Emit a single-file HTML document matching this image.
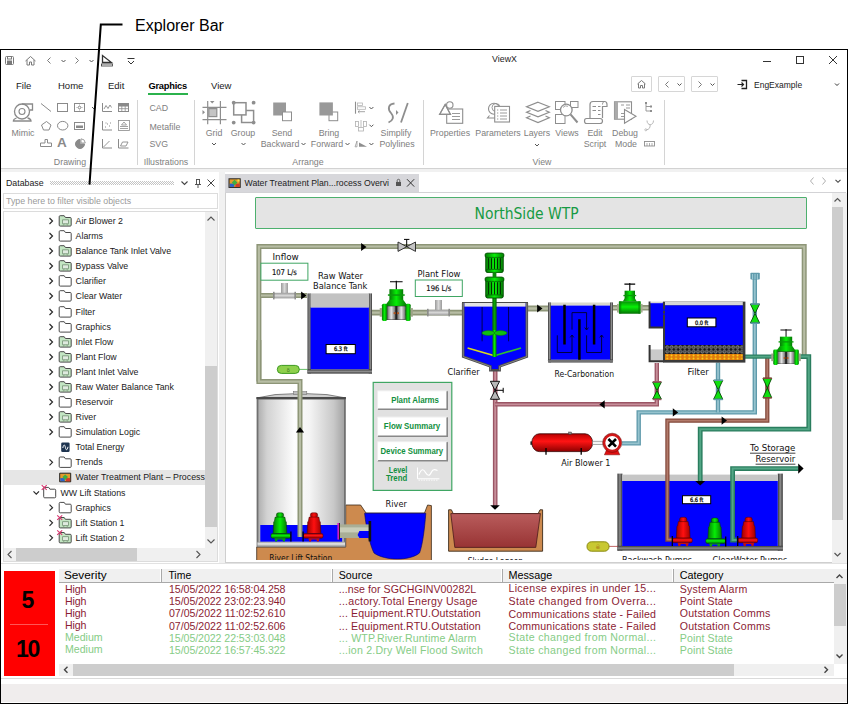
<!DOCTYPE html>
<html><head><meta charset="utf-8"><title>ViewX</title>
<style>
html,body{margin:0;padding:0;background:#fff;}
body{width:848px;height:704px;position:relative;overflow:hidden;font-family:"Liberation Sans",sans-serif;font-size:8.8px;color:#1a1a1a;}
.a{position:absolute;white-space:nowrap;}
.t{position:absolute;white-space:nowrap;line-height:12px;height:12px;}
.g{color:#7e7e7e;}
svg{position:absolute;left:0;top:0;overflow:visible;}
</style></head><body>
<!-- annotation -->
<div class="a" style="left:135px;top:15.6px;font-size:16px;line-height:20px;color:#000;">Explorer Bar</div>

<!-- window frame -->
<div class="a" style="left:0;top:49px;width:846px;height:653px;border:1px solid #000;background:#fff;box-sizing:content-box;"></div>

<!-- title bar -->
<div class="t" style="left:492px;top:53px;width:25px;text-align:center;">ViewX</div>
<svg width="848" height="704" viewBox="0 0 848 704" fill="none" stroke="#7a7a7a" stroke-width="1">
 <!-- save -->
 <rect x="5.5" y="56.5" width="8" height="8" rx="1"/><rect x="7.5" y="56.5" width="4" height="2.5"/><rect x="7.5" y="61" width="4" height="3.5" fill="#7a7a7a"/>
 <!-- home -->
 <path d="M25.5 61 L30.5 56.5 L35.5 61 M27 60 V65 H29.5 V62 H31.5 V65 H34 V60"/>
 <!-- nav -->
 <path d="M50.5 57.5 L47.5 60.5 L50.5 63.5" /><path d="M61.5 60 L63.5 62 L65.5 60" stroke="#555"/>
 <path d="M75.5 57.5 L78.5 60.5 L75.5 63.5" /><path d="M89.5 60 L91.5 62 L93.5 60" stroke="#555"/>
 <!-- ruler triangle -->
 <path d="M102.5 55.5 V62.5 H111.5 Z" stroke="#333" stroke-width="1.3"/><rect x="101.5" y="64" width="11" height="2" stroke="#333" stroke-width="0.8"/>
 <!-- customise -->
 <path d="M127.5 58.5 H134.5 M128 61 L131 64 L134 61" stroke="#333"/>
 <!-- window controls -->
 <path d="M763 61.5 H771" stroke="#333"/><rect x="796.5" y="56.5" width="7" height="7" stroke="#333"/><path d="M829 56 L837 64 M837 56 L829 64" stroke="#333"/>
</svg>
<!--TITLEBAR-->
<!-- tabs -->
<div class="t" style="left:16px;top:79.5px;font-size:9.5px;">File</div>
<div class="t" style="left:58px;top:79.5px;font-size:9.5px;">Home</div>
<div class="t" style="left:108px;top:79.5px;font-size:9.5px;">Edit</div>
<div class="t" style="left:148.5px;top:79.5px;font-size:9.3px;font-weight:bold;color:#000;letter-spacing:-0.25px;">Graphics</div>
<div class="a" style="left:148px;top:93px;width:40px;height:2px;background:#2bb24c;"></div>
<div class="t" style="left:211px;top:79.5px;font-size:9.5px;">View</div>
<div class="a" style="left:631px;top:76px;width:21px;height:16px;border:1px solid #d6d6d6;box-sizing:border-box;border-radius:1px;"></div>
<div class="a" style="left:658px;top:76px;width:27px;height:16px;border:1px solid #d6d6d6;box-sizing:border-box;border-radius:1px;"></div>
<div class="a" style="left:691px;top:76px;width:27px;height:16px;border:1px solid #d6d6d6;box-sizing:border-box;border-radius:1px;"></div>
<svg width="848" height="704" viewBox="0 0 848 704" fill="none" stroke="#7a7a7a" stroke-width="1">
 <path d="M637.5 84 L641.5 80.5 L645.5 84 M638.5 83.5 V88 H640.5 V85.5 H642.5 V88 H644.5 V83.5"/>
 <path d="M668.5 81.5 L665.5 84.5 L668.5 87.5"/><path d="M677.5 83.5 L679.5 85.5 L681.5 83.5" stroke="#555"/>
 <path d="M698.5 81.5 L701.5 84.5 L698.5 87.5"/><path d="M710.5 83.5 L712.5 85.5 L714.5 83.5" stroke="#555"/>
 <!-- login icon -->
 <path d="M741.5 80.5 H746.5 V88.5 H741.5" stroke="#222" stroke-width="1.3"/><path d="M737.5 84.5 H743.5 M741.5 82.5 L743.5 84.5 L741.5 86.5" stroke="#222" stroke-width="1.2"/>
 <path d="M835 83.5 L837 85.5 L839 83.5" stroke="#333"/>
</svg>
<div class="t" style="left:754px;top:79px;font-size:8.5px;">EngExample</div>
<!--TABS-->
<!-- ribbon -->
<div class="t g" style="left:8px;top:127px;width:30px;text-align:center;">Mimic</div>
<div class="t g" style="left:50px;top:156px;width:40px;text-align:center;">Drawing</div>
<div class="t g" style="left:149.5px;top:102px;">CAD</div>
<div class="t g" style="left:149.5px;top:120.5px;">Metafile</div>
<div class="t g" style="left:149.5px;top:138px;">SVG</div>
<div class="t g" style="left:140px;top:156px;width:52px;text-align:center;">Illustrations</div>
<div class="t g" style="left:199px;top:127px;width:30px;text-align:center;">Grid</div>
<div class="t g" style="left:228px;top:127px;width:30px;text-align:center;">Group</div>
<div class="t g" style="left:267px;top:127px;width:30px;text-align:center;">Send</div>
<div class="t g" style="left:258px;top:137.5px;width:44px;text-align:center;">Backward</div>
<div class="t g" style="left:314px;top:127px;width:30px;text-align:center;">Bring</div>
<div class="t g" style="left:308px;top:137.5px;width:38px;text-align:center;">Forward</div>
<div class="t g" style="left:376px;top:127px;width:40px;text-align:center;">Simplify</div>
<div class="t g" style="left:376px;top:137.5px;width:42px;text-align:center;">Polylines</div>
<div class="t g" style="left:288px;top:156px;width:40px;text-align:center;">Arrange</div>
<div class="t g" style="left:425px;top:127px;width:50px;text-align:center;">Properties</div>
<div class="t g" style="left:472px;top:127px;width:52px;text-align:center;">Parameters</div>
<div class="t g" style="left:522px;top:127px;width:30px;text-align:center;">Layers</div>
<div class="t g" style="left:552px;top:127px;width:30px;text-align:center;">Views</div>
<div class="t g" style="left:580px;top:127px;width:30px;text-align:center;">Edit</div>
<div class="t g" style="left:580px;top:137.5px;width:30px;text-align:center;">Script</div>
<div class="t g" style="left:610px;top:127px;width:30px;text-align:center;">Debug</div>
<div class="t g" style="left:610px;top:137.5px;width:32px;text-align:center;">Mode</div>
<div class="t g" style="left:527px;top:156px;width:30px;text-align:center;">View</div>
<div class="a" style="left:137px;top:100px;width:1px;height:65px;background:#d4d4d4;"></div>
<div class="a" style="left:194px;top:100px;width:1px;height:65px;background:#d4d4d4;"></div>
<div class="a" style="left:422.5px;top:100px;width:1px;height:65px;background:#d4d4d4;"></div>
<div class="a" style="left:663.5px;top:100px;width:1px;height:65px;background:#d4d4d4;"></div>
<div class="a" style="left:1px;top:168px;width:846px;height:1px;background:#d2d2d2;"></div>
<div class="a" style="left:1px;top:169px;width:846px;height:3px;background:#f1f1f1;"></div>
<svg width="848" height="704" viewBox="0 0 848 704" fill="none" stroke="#8a8a8a" stroke-width="1">
 <!-- mimic icon -->
 <path d="M22 104 H32.5 V110 H29.5" stroke-width="1.3"/><circle cx="22" cy="111.5" r="7.5" stroke-width="1.3"/><circle cx="22" cy="111.5" r="3" stroke-width="1.1"/>
 <path d="M16.5 118 C14.5 118.6 13.4 119.6 13.4 121 H31 C31 119.6 29.8 118.6 27.6 118" stroke-width="1.3"/>
 <!-- drawing row1 -->
 <path d="M41 103.5 L51 111.5"/><rect x="57.5" y="103.5" width="10" height="8"/><rect x="74.5" y="103.5" width="10" height="8"/><circle cx="79.5" cy="107.5" r="1.3"/><path d="M79.5 104.5V105.5M79.5 109.5V110.5M76.5 107.5H77.5M81.5 107.5H82.5" stroke-width="0.7"/>
 <path d="M92 107 L94 109 L96 107" stroke="#555"/>
 <!-- row2 -->
 <path d="M46.5 121.5 L51 125 L49 130 H43.5 L41.5 125 Z"/><ellipse cx="62.7" cy="125.7" rx="5.2" ry="4.3"/><rect x="74.5" y="122.5" width="10" height="7"/><rect x="76" y="125.5" width="7" height="2.5" fill="#8a8a8a" stroke="none"/>
 <!-- row3 -->
 <path d="M45 139.5 H47.5 V143 H51.5 V146.5 H40.5 V143 H45 Z"/>
 <path d="M80 139.5 A4.5 4.5 0 1 0 84.5 144 H80 Z" fill="#8a8a8a"/><path d="M81 138.8 A4.5 4.5 0 0 1 85.3 143 H81 Z" stroke-width="0.8"/>
 <!-- chart icons -->
 <path d="M102.5 103 V111.5 H112"/><path d="M104 109 L106 105.5 L108 108.5 L110 105 L111.5 107.5" stroke-width="0.9"/>
 <rect x="118.5" y="103.5" width="10" height="8"/><rect x="118.5" y="103.5" width="10" height="2.5" fill="#8a8a8a"/><path d="M121.8 103.5V111.5M125.2 103.5V111.5M118.5 108.7H128.5" stroke-width="0.8"/>
 <path d="M102.5 121 V130 H112"/><path d="M105 127h1M107 124h1M109 126h1M110 123h1M105.5 123h1" stroke-width="1"/>
 <rect x="118.5" y="120.5" width="11" height="10" stroke-width="0.8"/><path d="M120 126.5H128M120 128.5H128M121.5 125 L124 122 L126.5 125Z" stroke-width="0.8"/>
 <path d="M102.5 139 V148 H112"/><path d="M103.5 147 L109.5 141" stroke-width="0.9"/>
 <path d="M118.5 139 V148 H128.5"/><path d="M120.5 146 L122.5 142 H128 L126 146 Z" stroke-width="0.9"/>
</svg>
<div class="a" style="left:57px;top:135px;font-size:13.5px;font-weight:bold;color:#8a8a8a;line-height:16px;">A</div>
<svg width="848" height="704" viewBox="0 0 848 704" fill="none" stroke="#8e8e8e" stroke-width="1">
 <!-- grid -->
 <path d="M207.7 101 V124.3 M220.4 101 V124.3 M202.5 107.4 H226.5 M202.5 119.7 H226.5" stroke-width="1.2"/>
 <rect x="208.8" y="108.6" width="8" height="8" fill="#c4c4c4" stroke-width="1.2"/>
 <path d="M210 101 H214.5 L212.2 103.5 Z M202.5 110 V114.5 L205 112.2 Z" fill="#8e8e8e" stroke="none"/>
 <!-- group -->
 <rect x="233.7" y="102.7" width="12.3" height="12.2" stroke-width="1.5"/><path d="M246 110.6 H253.6 V122.6 H241.6 V115" stroke-width="1.5"/>
 <circle cx="233.7" cy="102.7" r="1.9" fill="#8e8e8e" stroke="none"/><circle cx="253.6" cy="102.7" r="1.9" fill="#8e8e8e" stroke="none"/><circle cx="233.7" cy="122.6" r="1.9" fill="#8e8e8e" stroke="none"/><circle cx="253.6" cy="122.6" r="1.9" fill="#8e8e8e" stroke="none"/>
 <!-- send backward -->
 <rect x="273.2" y="102.5" width="12.8" height="13" fill="#999" stroke="none"/><rect x="282.5" y="112" width="9" height="8.7" fill="#fff"/>
 <!-- bring forward -->
 <rect x="329" y="112" width="8.7" height="8.7" fill="#fff"/><rect x="319.4" y="102.4" width="13.5" height="13.1" fill="#999" stroke="none"/>
 <!-- align small icons -->
 <path d="M355.5 101.7 V113.7" stroke-width="1.1"/><rect x="357.5" y="103" width="5" height="2.5" stroke="#b5b5b5" stroke-width="0.8"/><rect x="357.5" y="106.8" width="8" height="2.5" stroke="#b5b5b5" stroke-width="0.8"/><path d="M358 111.7 H365 M359.5 110.5 L358 111.7 L359.5 113" stroke-width="0.8"/>
 <rect x="355.5" y="121.5" width="3" height="5" stroke="#b0b0b0" stroke-width="0.8"/><rect x="363.5" y="121.5" width="3" height="5" stroke="#b0b0b0" stroke-width="0.8"/><rect x="358.5" y="127.5" width="5" height="3.5" stroke="#b0b0b0" stroke-width="0.8"/><path d="M361 120 V127" stroke="#b0b0b0" stroke-width="0.8"/>
 <path d="M355 146.8 L357 141 V146.8 Z" stroke-width="0.7"/><path d="M359 142.5 L367 146.8 H359 Z" fill="#8e8e8e" stroke="none"/>
 <path d="M369.4 107 L371.4 109 L373.4 107 M369.4 124.7 L371.4 126.7 L373.4 124.7 M369.4 143 L371.4 145 L373.4 143" stroke="#555"/>
 <!-- simplify -->
 <path d="M394.5 103.5 C388 104, 387.5 109, 391 113 C394.5 117, 393 120.5, 388.5 122.5" stroke-width="1.8"/><path d="M407.8 103 L401 122.5" stroke-width="1.8"/><path d="M396 110 V115 L398.5 112.5 Z" fill="#8e8e8e" stroke="none"/>
 <!-- chevrons under labels -->
 <path d="M212 143 L214 145 L216 143 M241.5 143 L243.5 145 L245.5 143 M301.5 143 L303.5 145 L305.5 143 M345.5 143 L347.5 145 L349.5 143 M535 144 L537 146 L539 144" stroke="#555"/>
 <!-- properties -->
 <rect x="446.7" y="109" width="16" height="14.3" fill="#fff" stroke-width="1.1"/><path d="M452 113.5 H460 M452 116.5 H460 M452 119.5 H460" stroke-width="0.9"/>
 <path d="M445.2 104.5 L450.5 114.4 H439.6 Z" fill="#fff" stroke-width="1.1"/><circle cx="449.8" cy="105" r="3.2" fill="#fff" stroke-width="1.1"/><path d="M445.2 104.5 L450.5 114.4 H439.6 Z" stroke-width="1.1"/>
 <!-- parameters -->
 <circle cx="494" cy="108.8" r="5.5" stroke-width="1.1"/><circle cx="496" cy="107.5" r="4" stroke-width="0.9"/><path d="M489.5 115.5 L487.5 118 H495" stroke-width="1.1"/>
 <rect x="494.7" y="106.4" width="14.8" height="15.6" fill="#fff" stroke-width="1.1"/><path d="M500 110 H507 M500 113 H507 M500 116 H507 M500 119 H507" stroke-width="0.9"/><path d="M497 110h1.3M497 113h1.3M497 116h1.3M497 119h1.3" stroke-width="0.9"/>
 <!-- layers -->
 <path d="M538 102.2 L549.3 106.8 L538 111.4 L526.6 106.8 Z" stroke-width="1.2"/>
 <path d="M530.5 110.5 L526.6 112.2 L538 116.8 L549.3 112.2 L545.5 110.5" stroke-width="1.2"/>
 <path d="M530.5 116 L526.6 117.7 L538 122.5 L549.3 117.7 L545.5 116" stroke-width="1.2"/>
 <!-- views -->
 <rect x="555.5" y="101.5" width="9.5" height="8"/><rect x="570.5" y="101.5" width="7.5" height="6"/><rect x="555.5" y="114.5" width="9.5" height="9"/>
 <circle cx="566.3" cy="110" r="5.8" fill="#fff" stroke-width="1.3"/><path d="M570.5 114.3 L577.5 122.5" stroke-width="2"/><path d="M563 107.5 A4 4 0 0 1 568 106.3" stroke-width="0.8"/>
 <!-- edit script -->
 <path d="M590 118 V104.5 C590 102.5, 591 101.5, 593 101.5 H604.5 C606.5 101.5, 607 103, 607 104.5 V106.5 H602.5 V118" stroke-width="1.2"/>
 <path d="M602.5 104.5 C602.5 102.5, 603.5 101.5, 604.5 101.5" stroke-width="1"/>
 <path d="M586.5 118.5 H600 C602 118.5, 602.5 120, 602.5 121 C602.5 122.5, 601.5 123.5, 600 123.5 H586.5 C585 123.5, 584.5 122, 584.5 121 C584.5 119.5, 585.5 118.5, 586.5 118.5 Z" stroke-width="1.2"/>
 <path d="M592.5 106.5h3.5M598 106.5h2.5M592.5 110.5h3.5M598 110.5h2.5M598 114.5h2.5" stroke-width="1"/>
 <!-- debug mode -->
 <rect x="614.5" y="101.8" width="17" height="17.4" stroke-width="1.1"/><rect x="614.5" y="101.8" width="3.5" height="17.4" fill="#aaa" stroke="none"/>
 <path d="M621 105h3M626 105h4M626 108h4M621 113.5h3M621 116.5h3" stroke-width="0.9"/>
 <path d="M624.5 109.5 L636 116.3 L624.5 123.3 Z" fill="#fff" stroke-width="1.1"/>
 <!-- small view icons -->
 <path d="M646 103 V111 H650 M646 106.5 H650" stroke-width="0.9"/><rect x="645" y="102" width="2" height="2" fill="#8e8e8e" stroke="none"/><rect x="650" y="105.5" width="2" height="2" fill="#8e8e8e" stroke="none"/><rect x="650" y="110" width="2" height="2" fill="#8e8e8e" stroke="none"/>
 <path d="M647 120.5 C647 126, 653.5 126, 653.5 120.5 M650.2 124.8 C650.2 128, 649 129.5, 646.5 129.8" stroke="#b0b0b0" stroke-width="0.9"/><circle cx="645.8" cy="129.8" r="1" stroke="#b0b0b0" stroke-width="0.8"/>
 <rect x="644.5" y="141.5" width="10" height="4.5" stroke-width="0.9"/><path d="M647 143v3M649.5 143v3M652 143v3" stroke-width="0.7"/>
</svg>
<!--RIBBON-->
<!-- dock area background -->
<div class="a" style="left:1px;top:172px;width:846px;height:396px;background:#fff;"></div>
<div class="a" style="left:219px;top:172px;width:6px;height:392px;background:#f1f1f1;"></div>
<!-- explorer panel -->
<div class="a" style="left:1px;top:172px;width:218px;height:392px;background:#fff;"></div>
<div class="t" style="left:6px;top:177px;">Database</div>
<svg width="848" height="704" viewBox="0 0 848 704" fill="none">
 <defs><pattern id="grip" x="50" y="181" width="2" height="2" patternUnits="userSpaceOnUse"><rect x="0" y="0" width="1" height="1" fill="#c4c4c4"/><rect x="1" y="1" width="1" height="1" fill="#c4c4c4"/></pattern></defs>
 <rect x="50" y="181" width="124" height="4" fill="url(#grip)"/>
 <path d="M181.5 181.5 L184.5 184.5 L187.5 181.5" stroke="#444" stroke-width="1.1"/>
 <path d="M196.5 179 V184.5 M199.5 179 V184.5 M196.5 179.5 H199.5 M195 184.5 H201 M198 184.5 V188" stroke="#444" stroke-width="0.9"/>
 <path d="M207.5 179.5 L214.5 186.5 M214.5 179.5 L207.5 186.5" stroke="#444" stroke-width="1"/>
</svg>
<div class="a" style="left:3px;top:193px;width:215px;height:16px;border:1px solid #dcdcdc;box-sizing:border-box;background:#fff;"></div>
<div class="t" style="left:6px;top:195px;color:#9a9a9a;">Type here to filter visible objects</div>
<div class="a" style="left:3px;top:211px;width:215px;height:351px;border:1px solid #dcdcdc;box-sizing:border-box;background:#fff;"></div>
<!--DOCK-->
<!-- tree -->
<div class="a" style="left:4px;top:470px;width:201px;height:15px;background:#e6e6e6;"></div>
<div class="t" style="left:75.6px;top:214.8px;">Air Blower 2</div>
<div class="t" style="left:75.6px;top:229.8px;">Alarms</div>
<div class="t" style="left:75.6px;top:244.8px;">Balance Tank Inlet Valve</div>
<div class="t" style="left:75.6px;top:259.8px;">Bypass Valve</div>
<div class="t" style="left:75.6px;top:274.8px;">Clarifier</div>
<div class="t" style="left:75.6px;top:289.8px;">Clear Water</div>
<div class="t" style="left:75.6px;top:305.8px;">Filter</div>
<div class="t" style="left:75.6px;top:320.8px;">Graphics</div>
<div class="t" style="left:75.6px;top:335.8px;">Inlet Flow</div>
<div class="t" style="left:75.6px;top:350.8px;">Plant Flow</div>
<div class="t" style="left:75.6px;top:365.8px;">Plant Inlet Valve</div>
<div class="t" style="left:75.6px;top:380.8px;">Raw Water Balance Tank</div>
<div class="t" style="left:75.6px;top:395.8px;">Reservoir</div>
<div class="t" style="left:75.6px;top:410.8px;">River</div>
<div class="t" style="left:75.6px;top:425.8px;">Simulation Logic</div>
<div class="t" style="left:75.6px;top:441.2px;">Total Energy</div>
<div class="t" style="left:75.6px;top:456.1px;">Trends</div>
<div class="t" style="left:75.6px;top:471.40000000000003px;">Water Treatment Plant  &#8211; Process</div>
<div class="t" style="left:60.5px;top:486.5px;">WW Lift Stations</div>
<div class="t" style="left:75.6px;top:501.5px;">Graphics</div>
<div class="t" style="left:75.6px;top:516.5999999999999px;">Lift Station 1</div>
<div class="t" style="left:75.6px;top:531.5999999999999px;">Lift Station 2</div>
<svg width="848" height="704" viewBox="0 0 848 704" fill="none" stroke-linejoin="round">
<path d="M49.5 218 L52.5 221 L49.5 224" stroke="#2a2a2a" stroke-width="1.2" stroke-linejoin="miter"/>
<path d="M60.2 215.7 H64.2 L65.4 217.5 H70.2 Q71.2 217.5 71.2 218.5 V225.1 Q71.2 226.1 70.2 226.1 H60.2 Q59.2 226.1 59.2 225.1 V216.7 Q59.2 215.7 60.2 215.7 Z" fill="#c3e6c3" stroke="#4a4a4a" stroke-width="1"/>
<rect x="62.5" y="219.8" width="6" height="4" stroke="#7d9a7d" stroke-width="0.9" fill="#dfeadf"/><path d="M64.2 223.8 L63.2 225.8 M66.8 223.8 L67.8 225.8" stroke="#7d9a7d" stroke-width="0.8"/>
<path d="M49.5 233 L52.5 236 L49.5 239" stroke="#2a2a2a" stroke-width="1.2" stroke-linejoin="miter"/>
<path d="M60.2 230.7 H64.2 L65.4 232.5 H70.2 Q71.2 232.5 71.2 233.5 V240.1 Q71.2 241.1 70.2 241.1 H60.2 Q59.2 241.1 59.2 240.1 V231.7 Q59.2 230.7 60.2 230.7 Z" fill="#fff" stroke="#4a4a4a" stroke-width="1"/>
<path d="M49.5 248 L52.5 251 L49.5 254" stroke="#2a2a2a" stroke-width="1.2" stroke-linejoin="miter"/>
<path d="M60.2 245.7 H64.2 L65.4 247.5 H70.2 Q71.2 247.5 71.2 248.5 V255.1 Q71.2 256.09999999999997 70.2 256.09999999999997 H60.2 Q59.2 256.09999999999997 59.2 255.1 V246.7 Q59.2 245.7 60.2 245.7 Z" fill="#c3e6c3" stroke="#4a4a4a" stroke-width="1"/>
<rect x="62.5" y="249.8" width="6" height="4" stroke="#7d9a7d" stroke-width="0.9" fill="#dfeadf"/><path d="M64.2 253.8 L63.2 255.8 M66.8 253.8 L67.8 255.8" stroke="#7d9a7d" stroke-width="0.8"/>
<path d="M49.5 263 L52.5 266 L49.5 269" stroke="#2a2a2a" stroke-width="1.2" stroke-linejoin="miter"/>
<path d="M60.2 260.7 H64.2 L65.4 262.5 H70.2 Q71.2 262.5 71.2 263.5 V270.09999999999997 Q71.2 271.09999999999997 70.2 271.09999999999997 H60.2 Q59.2 271.09999999999997 59.2 270.09999999999997 V261.7 Q59.2 260.7 60.2 260.7 Z" fill="#c3e6c3" stroke="#4a4a4a" stroke-width="1"/>
<rect x="62.5" y="264.8" width="6" height="4" stroke="#7d9a7d" stroke-width="0.9" fill="#dfeadf"/><path d="M64.2 268.8 L63.2 270.8 M66.8 268.8 L67.8 270.8" stroke="#7d9a7d" stroke-width="0.8"/>
<path d="M49.5 278 L52.5 281 L49.5 284" stroke="#2a2a2a" stroke-width="1.2" stroke-linejoin="miter"/>
<path d="M60.2 275.7 H64.2 L65.4 277.5 H70.2 Q71.2 277.5 71.2 278.5 V285.09999999999997 Q71.2 286.09999999999997 70.2 286.09999999999997 H60.2 Q59.2 286.09999999999997 59.2 285.09999999999997 V276.7 Q59.2 275.7 60.2 275.7 Z" fill="#fff" stroke="#4a4a4a" stroke-width="1"/>
<path d="M49.5 293 L52.5 296 L49.5 299" stroke="#2a2a2a" stroke-width="1.2" stroke-linejoin="miter"/>
<path d="M60.2 290.7 H64.2 L65.4 292.5 H70.2 Q71.2 292.5 71.2 293.5 V300.09999999999997 Q71.2 301.09999999999997 70.2 301.09999999999997 H60.2 Q59.2 301.09999999999997 59.2 300.09999999999997 V291.7 Q59.2 290.7 60.2 290.7 Z" fill="#fff" stroke="#4a4a4a" stroke-width="1"/>
<path d="M49.5 309 L52.5 312 L49.5 315" stroke="#2a2a2a" stroke-width="1.2" stroke-linejoin="miter"/>
<path d="M60.2 306.7 H64.2 L65.4 308.5 H70.2 Q71.2 308.5 71.2 309.5 V316.09999999999997 Q71.2 317.09999999999997 70.2 317.09999999999997 H60.2 Q59.2 317.09999999999997 59.2 316.09999999999997 V307.7 Q59.2 306.7 60.2 306.7 Z" fill="#fff" stroke="#4a4a4a" stroke-width="1"/>
<path d="M49.5 324 L52.5 327 L49.5 330" stroke="#2a2a2a" stroke-width="1.2" stroke-linejoin="miter"/>
<path d="M60.2 321.7 H64.2 L65.4 323.5 H70.2 Q71.2 323.5 71.2 324.5 V331.09999999999997 Q71.2 332.09999999999997 70.2 332.09999999999997 H60.2 Q59.2 332.09999999999997 59.2 331.09999999999997 V322.7 Q59.2 321.7 60.2 321.7 Z" fill="#fff" stroke="#4a4a4a" stroke-width="1"/>
<path d="M49.5 339 L52.5 342 L49.5 345" stroke="#2a2a2a" stroke-width="1.2" stroke-linejoin="miter"/>
<path d="M60.2 336.7 H64.2 L65.4 338.5 H70.2 Q71.2 338.5 71.2 339.5 V346.09999999999997 Q71.2 347.09999999999997 70.2 347.09999999999997 H60.2 Q59.2 347.09999999999997 59.2 346.09999999999997 V337.7 Q59.2 336.7 60.2 336.7 Z" fill="#c3e6c3" stroke="#4a4a4a" stroke-width="1"/>
<rect x="62.5" y="340.8" width="6" height="4" stroke="#7d9a7d" stroke-width="0.9" fill="#dfeadf"/><path d="M64.2 344.8 L63.2 346.8 M66.8 344.8 L67.8 346.8" stroke="#7d9a7d" stroke-width="0.8"/>
<path d="M49.5 354 L52.5 357 L49.5 360" stroke="#2a2a2a" stroke-width="1.2" stroke-linejoin="miter"/>
<path d="M60.2 351.7 H64.2 L65.4 353.5 H70.2 Q71.2 353.5 71.2 354.5 V361.09999999999997 Q71.2 362.09999999999997 70.2 362.09999999999997 H60.2 Q59.2 362.09999999999997 59.2 361.09999999999997 V352.7 Q59.2 351.7 60.2 351.7 Z" fill="#c3e6c3" stroke="#4a4a4a" stroke-width="1"/>
<rect x="62.5" y="355.8" width="6" height="4" stroke="#7d9a7d" stroke-width="0.9" fill="#dfeadf"/><path d="M64.2 359.8 L63.2 361.8 M66.8 359.8 L67.8 361.8" stroke="#7d9a7d" stroke-width="0.8"/>
<path d="M49.5 369 L52.5 372 L49.5 375" stroke="#2a2a2a" stroke-width="1.2" stroke-linejoin="miter"/>
<path d="M60.2 366.7 H64.2 L65.4 368.5 H70.2 Q71.2 368.5 71.2 369.5 V376.09999999999997 Q71.2 377.09999999999997 70.2 377.09999999999997 H60.2 Q59.2 377.09999999999997 59.2 376.09999999999997 V367.7 Q59.2 366.7 60.2 366.7 Z" fill="#c3e6c3" stroke="#4a4a4a" stroke-width="1"/>
<rect x="62.5" y="370.8" width="6" height="4" stroke="#7d9a7d" stroke-width="0.9" fill="#dfeadf"/><path d="M64.2 374.8 L63.2 376.8 M66.8 374.8 L67.8 376.8" stroke="#7d9a7d" stroke-width="0.8"/>
<path d="M49.5 384 L52.5 387 L49.5 390" stroke="#2a2a2a" stroke-width="1.2" stroke-linejoin="miter"/>
<path d="M60.2 381.7 H64.2 L65.4 383.5 H70.2 Q71.2 383.5 71.2 384.5 V391.09999999999997 Q71.2 392.09999999999997 70.2 392.09999999999997 H60.2 Q59.2 392.09999999999997 59.2 391.09999999999997 V382.7 Q59.2 381.7 60.2 381.7 Z" fill="#c3e6c3" stroke="#4a4a4a" stroke-width="1"/>
<rect x="62.5" y="385.8" width="6" height="4" stroke="#7d9a7d" stroke-width="0.9" fill="#dfeadf"/><path d="M64.2 389.8 L63.2 391.8 M66.8 389.8 L67.8 391.8" stroke="#7d9a7d" stroke-width="0.8"/>
<path d="M49.5 399 L52.5 402 L49.5 405" stroke="#2a2a2a" stroke-width="1.2" stroke-linejoin="miter"/>
<path d="M60.2 396.7 H64.2 L65.4 398.5 H70.2 Q71.2 398.5 71.2 399.5 V406.09999999999997 Q71.2 407.09999999999997 70.2 407.09999999999997 H60.2 Q59.2 407.09999999999997 59.2 406.09999999999997 V397.7 Q59.2 396.7 60.2 396.7 Z" fill="#fff" stroke="#4a4a4a" stroke-width="1"/>
<path d="M49.5 414 L52.5 417 L49.5 420" stroke="#2a2a2a" stroke-width="1.2" stroke-linejoin="miter"/>
<path d="M60.2 411.7 H64.2 L65.4 413.5 H70.2 Q71.2 413.5 71.2 414.5 V421.09999999999997 Q71.2 422.09999999999997 70.2 422.09999999999997 H60.2 Q59.2 422.09999999999997 59.2 421.09999999999997 V412.7 Q59.2 411.7 60.2 411.7 Z" fill="#c3e6c3" stroke="#4a4a4a" stroke-width="1"/>
<rect x="62.5" y="415.8" width="6" height="4" stroke="#7d9a7d" stroke-width="0.9" fill="#dfeadf"/><path d="M64.2 419.8 L63.2 421.8 M66.8 419.8 L67.8 421.8" stroke="#7d9a7d" stroke-width="0.8"/>
<path d="M49.5 429 L52.5 432 L49.5 435" stroke="#2a2a2a" stroke-width="1.2" stroke-linejoin="miter"/>
<path d="M60.2 426.7 H64.2 L65.4 428.5 H70.2 Q71.2 428.5 71.2 429.5 V436.09999999999997 Q71.2 437.09999999999997 70.2 437.09999999999997 H60.2 Q59.2 437.09999999999997 59.2 436.09999999999997 V427.7 Q59.2 426.7 60.2 426.7 Z" fill="#fff" stroke="#4a4a4a" stroke-width="1"/>
<rect x="61.2" y="442.4" width="8.4" height="9.6" rx="1.3" fill="#1e3450"/><path d="M62.8 448.0 C63.6 444.2 64.8 444.2 65.4 447.4 C66 450.59999999999997 67.2 450.59999999999997 68 446.79999999999995" stroke="#fff" stroke-width="1"/>
<path d="M49.5 459.3 L52.5 462.3 L49.5 465.3" stroke="#2a2a2a" stroke-width="1.2" stroke-linejoin="miter"/>
<path d="M60.2 457.0 H64.2 L65.4 458.8 H70.2 Q71.2 458.8 71.2 459.8 V466.4 Q71.2 467.4 70.2 467.4 H60.2 Q59.2 467.4 59.2 466.4 V458.0 Q59.2 457.0 60.2 457.0 Z" fill="#fff" stroke="#4a4a4a" stroke-width="1"/>
<rect x="59.7" y="473.20000000000005" width="11" height="8.6" fill="#e39a2c" stroke="#222" stroke-width="1"/><rect x="60.3" y="478.1" width="4.5" height="3.2" fill="#2a62c8"/><rect x="66" y="478.1" width="4.2" height="3.2" fill="#d23a2a"/><path d="M65.2 474.40000000000003 L68 477.0 L65.2 480.0 L62.4 477.0 Z" fill="#3fae3f"/>
<path d="M33.5 491.4 L36.3 494.2 L39 491.4" stroke="#2a2a2a" stroke-width="1.2" stroke-linejoin="miter"/>
<path d="M44.7 487.4 H48.7 L49.900000000000006 489.2 H54.7 Q55.7 489.2 55.7 490.2 V496.79999999999995 Q55.7 497.79999999999995 54.7 497.79999999999995 H44.7 Q43.7 497.79999999999995 43.7 496.79999999999995 V488.4 Q43.7 487.4 44.7 487.4 Z" fill="#fff" stroke="#4a4a4a" stroke-width="1"/>
<path d="M41.7 485.2 L46.7 489.8 M46.7 485.2 L41.7 489.8" stroke="#d8336e" stroke-width="1.1"/>
<path d="M49.5 504.7 L52.5 507.7 L49.5 510.7" stroke="#2a2a2a" stroke-width="1.2" stroke-linejoin="miter"/>
<path d="M60.2 502.4 H64.2 L65.4 504.2 H70.2 Q71.2 504.2 71.2 505.2 V511.79999999999995 Q71.2 512.8 70.2 512.8 H60.2 Q59.2 512.8 59.2 511.79999999999995 V503.4 Q59.2 502.4 60.2 502.4 Z" fill="#fff" stroke="#4a4a4a" stroke-width="1"/>
<path d="M49.5 519.8 L52.5 522.8 L49.5 525.8" stroke="#2a2a2a" stroke-width="1.2" stroke-linejoin="miter"/>
<path d="M60.2 517.5 H64.2 L65.4 519.3 H70.2 Q71.2 519.3 71.2 520.3 V526.9 Q71.2 527.9 70.2 527.9 H60.2 Q59.2 527.9 59.2 526.9 V518.5 Q59.2 517.5 60.2 517.5 Z" fill="#c3e6c3" stroke="#4a4a4a" stroke-width="1"/>
<rect x="62.5" y="521.5999999999999" width="6" height="4" stroke="#7d9a7d" stroke-width="0.9" fill="#dfeadf"/><path d="M64.2 525.5999999999999 L63.2 527.5999999999999 M66.8 525.5999999999999 L67.8 527.5999999999999" stroke="#7d9a7d" stroke-width="0.8"/>
<path d="M57.2 515.3 L62.2 519.9 M62.2 515.3 L57.2 519.9" stroke="#d8336e" stroke-width="1.1"/>
<path d="M49.5 534.8 L52.5 537.8 L49.5 540.8" stroke="#2a2a2a" stroke-width="1.2" stroke-linejoin="miter"/>
<path d="M60.2 532.5 H64.2 L65.4 534.3 H70.2 Q71.2 534.3 71.2 535.3 V541.9 Q71.2 542.9 70.2 542.9 H60.2 Q59.2 542.9 59.2 541.9 V533.5 Q59.2 532.5 60.2 532.5 Z" fill="#c3e6c3" stroke="#4a4a4a" stroke-width="1"/>
<rect x="62.5" y="536.5999999999999" width="6" height="4" stroke="#7d9a7d" stroke-width="0.9" fill="#dfeadf"/><path d="M64.2 540.5999999999999 L63.2 542.5999999999999 M66.8 540.5999999999999 L67.8 542.5999999999999" stroke="#7d9a7d" stroke-width="0.8"/>
<path d="M57.2 530.3 L62.2 534.9 M62.2 530.3 L57.2 534.9" stroke="#d8336e" stroke-width="1.1"/>
</svg>
<div class="a" style="left:205px;top:212px;width:12px;height:336px;background:#f0f0f0;"></div>
<div class="a" style="left:205px;top:366px;width:12px;height:161px;background:#cdcdcd;"></div>
<div class="a" style="left:4px;top:548px;width:201px;height:13px;background:#f0f0f0;"></div>
<div class="a" style="left:16px;top:548px;width:121px;height:13px;background:#cdcdcd;"></div>
<div class="a" style="left:205px;top:548px;width:12px;height:13px;background:#f0f0f0;"></div>
<svg width="848" height="704" viewBox="0 0 848 704" fill="none" stroke="#555" stroke-width="1.1">
<path d="M207.5 220.5 L211 217 L214.5 220.5"/><path d="M207.5 539.5 L211 543 L214.5 539.5"/>
<path d="M11.5 551 L8 554.5 L11.5 558"/><path d="M196.5 551 L200 554.5 L196.5 558"/>
</svg>
<!--TREE-->
<!-- doc tab + frame -->
<div class="a" style="left:225px;top:174px;width:194px;height:19px;background:#d7d7db;"></div>
<div class="a" style="left:225px;top:191.5px;width:621px;height:1.5px;background:#d3d3d6;"></div>
<div class="a" style="left:225px;top:193px;width:621px;height:370px;background:#fff;border-left:1px solid #cfcfcf;border-bottom:1px solid #cfcfcf;box-sizing:border-box;"></div>
<div class="t" style="left:244.5px;top:177px;font-size:8.7px;color:#222;">Water Treatment Plan...rocess Overvi</div>
<svg width="848" height="704" viewBox="0 0 848 704" fill="none">
 <rect x="229" y="178.8" width="11.2" height="8.6" fill="#e39a2c" stroke="#222" stroke-width="1"/><rect x="229.6" y="183.6" width="4.6" height="3.3" fill="#2a62c8"/><rect x="235.4" y="183.6" width="4.3" height="3.3" fill="#d23a2a"/><path d="M234.6 179.8 L237.4 182.6 L234.6 185.6 L231.8 182.6 Z" fill="#3fae3f"/><rect x="237.5" y="179.5" width="2" height="2" fill="#f2e24a"/>
 <rect x="396" y="182" width="5" height="4" fill="#555"/><path d="M397.2 182 V180.6 A1.3 1.3 0 0 1 399.8 180.6 V182" stroke="#555" stroke-width="0.9"/>
 <path d="M407 179.2 L414.2 186.6 M414.2 179.2 L407 186.6" stroke="#333" stroke-width="1"/>
 <path d="M813.5 177.5 L810.5 181 L813.5 184.5 M822.5 177.5 L825.5 181 L822.5 184.5" stroke="#b0b0b0" stroke-width="1"/><path d="M835.5 179.8 L838 182.3 L840.5 179.8" stroke="#444" stroke-width="1.1"/>
</svg>
<!-- mimic vertical scrollbar -->
<div class="a" style="left:832px;top:193px;width:15px;height:370px;background:#f0f0f0;"></div>
<div class="a" style="left:832px;top:207px;width:11px;height:313px;background:#cdcdcd;"></div>
<svg width="848" height="704" viewBox="0 0 848 704" fill="none" stroke="#555" stroke-width="1.2"><path d="M834.5 201.5 L837.5 198.5 L840.5 201.5"/><path d="M834.5 553 L837.5 556 L840.5 553"/></svg>
<!-- mimic title -->
<div class="a" style="left:255px;top:197px;width:552px;height:32px;box-sizing:border-box;border:1px solid #4db06e;background:#e4e4e4;border-radius:1px;"></div>
<svg width="848" height="704" viewBox="0 0 848 704"><text x="474.6" y="218.6" font-size="15.6" fill="#169a43" textLength="104" lengthAdjust="spacingAndGlyphs" font-family="'DejaVu Sans Condensed','DejaVu Sans',sans-serif">NorthSide WTP</text></svg>
<!--MSTART-->
<svg width="848" height="704" viewBox="0 0 848 704" fill="none" font-family="'DejaVu Sans Condensed','DejaVu Sans',sans-serif">
<defs>
<clipPath id="mclip"><rect x="226" y="193" width="606" height="367"/></clipPath>
<linearGradient id="gH" x1="0" x2="1" y1="0" y2="0"><stop offset="0" stop-color="#067806"/><stop offset="0.5" stop-color="#06ee06"/><stop offset="1" stop-color="#067806"/></linearGradient>
<linearGradient id="gV" x1="0" x2="0" y1="0" y2="1"><stop offset="0" stop-color="#069006"/><stop offset="0.45" stop-color="#06f006"/><stop offset="1" stop-color="#057005"/></linearGradient>
<linearGradient id="rH" x1="0" x2="1" y1="0" y2="0"><stop offset="0" stop-color="#a00000"/><stop offset="0.5" stop-color="#ff1010"/><stop offset="1" stop-color="#a00000"/></linearGradient>
<linearGradient id="rV" x1="0" x2="0" y1="0" y2="1"><stop offset="0" stop-color="#b80000"/><stop offset="0.42" stop-color="#ff1414"/><stop offset="1" stop-color="#8c0000"/></linearGradient>
<linearGradient id="sil" x1="0" x2="1" y1="0" y2="0"><stop offset="0" stop-color="#6e6e6e"/><stop offset="0.5" stop-color="#e4e4e4"/><stop offset="1" stop-color="#6e6e6e"/></linearGradient>
<linearGradient id="tank" x1="0" x2="1" y1="0" y2="0"><stop offset="0" stop-color="#b0b0b0"/><stop offset="0.1" stop-color="#d2d2d2"/><stop offset="0.42" stop-color="#fdfdfd"/><stop offset="0.6" stop-color="#f4f4f4"/><stop offset="0.88" stop-color="#c8c8c8"/><stop offset="1" stop-color="#a4a4a4"/></linearGradient><linearGradient id="band" x1="0" x2="0" y1="0" y2="1"><stop offset="0" stop-color="#9a9a9a"/><stop offset="0.4" stop-color="#ececec"/><stop offset="1" stop-color="#7a7a7a"/></linearGradient>
<linearGradient id="wall" x1="0" x2="1" y1="0" y2="0"><stop offset="0" stop-color="#363636"/><stop offset="0.5" stop-color="#8e8e8e"/><stop offset="1" stop-color="#363636"/></linearGradient><linearGradient id="wallV" x1="0" x2="0" y1="0" y2="1"><stop offset="0" stop-color="#363636"/><stop offset="0.5" stop-color="#8e8e8e"/><stop offset="1" stop-color="#363636"/></linearGradient><linearGradient id="lag" x1="0" x2="0" y1="0" y2="1"><stop offset="0" stop-color="#b95c5c"/><stop offset="1" stop-color="#983434"/></linearGradient>
<linearGradient id="fm" x1="0" x2="1" y1="0" y2="0"><stop offset="0" stop-color="#9a9a9a"/><stop offset="0.5" stop-color="#d8d8d8"/><stop offset="1" stop-color="#9a9a9a"/></linearGradient>
<linearGradient id="fmV" x1="0" x2="0" y1="0" y2="1"><stop offset="0" stop-color="#9a9a9a"/><stop offset="0.5" stop-color="#d8d8d8"/><stop offset="1" stop-color="#9a9a9a"/></linearGradient>
<pattern id="med1" x="665" y="345" width="4.4" height="4.5" patternUnits="userSpaceOnUse"><rect width="4.4" height="4.5" fill="#161616"/><circle cx="2.2" cy="2.2" r="1.5" fill="#3a3a3a" stroke="#a2a2a2" stroke-width="0.8"/></pattern>
<pattern id="med2" x="665" y="354" width="4.4" height="3" patternUnits="userSpaceOnUse"><rect width="4.4" height="3" fill="#e07c0c"/><circle cx="2.2" cy="1.5" r="0.95" fill="#ffd21a"/></pattern>
</defs>
<g clip-path="url(#mclip)">
<rect x="617.4" y="473.6" width="5" height="77" fill="url(#wall)"/><rect x="777.8" y="473.6" width="5" height="77" fill="url(#wall)"/><rect x="617.4" y="545.8" width="165.4" height="4.8" fill="url(#wallV)"/>
<rect x="622.2" y="474.6" width="155.6" height="6.4" fill="#c6c6c6"/>
<rect x="622.2" y="481" width="155.6" height="65" fill="#0000ff"/>
<rect x="682.5" y="495.7" width="28.2" height="8" fill="#fff" stroke="#000" stroke-width="1"/>
<text x="696.6" y="501.9" font-size="6" fill="#000" text-anchor="middle" textLength="13.4" lengthAdjust="spacingAndGlyphs" stroke="#000" stroke-width="0.25">6.6 ft</text>
<path d="M256.7 547 V562 H431.4 V505.6 L427.6 505 L424.5 513 H366 L360.6 505 H345.7 V547 Z" fill="#cd8a4e" stroke="#3a2a1a" stroke-width="0.8"/>
<path d="M364.6 513.3 H425.8 C424.5 530 422.5 545 419.5 553 C410 561 385 561 374 553 C370 545 366.5 530 364.6 513.3 Z" fill="#0000ff" stroke="#00006a" stroke-width="0.6"/>
<path d="M275 394.6 L301 393.4 L327 394.6 L346 398 H256.4 Z" fill="#cfcfcf" stroke="#555" stroke-width="0.7"/>
<rect x="293.4" y="391.6" width="13.4" height="3" fill="#bdbdbd" stroke="#666" stroke-width="0.5"/>
<rect x="256.6" y="397.6" width="89.2" height="149.6" fill="#707070"/>
<rect x="258.4" y="399.4" width="85.6" height="144" fill="url(#tank)"/>
<rect x="256.6" y="397" width="89.2" height="2.2" fill="#4a4a4a"/>
<rect x="260.3" y="525" width="81.8" height="16.8" fill="#0000ff"/>
<rect x="257.4" y="541.8" width="87.6" height="5.2" fill="url(#band)"/>
<path d="M448.6 509.8 L451.4 509.8 L453.2 513.6 H538.2 L540 509.8 L542.6 509.8 V551.2 H448.6 Z" fill="#cd8a4e" stroke="#3a2a1a" stroke-width="0.9"/>
<path d="M450.8 513.6 H540.4 L535.8 547.4 H454.8 Z" fill="url(#lag)" stroke="#4a1a1a" stroke-width="0.8"/>
<polyline points="258.9,381.6 258.9,246.5 804.2,246.5 804.2,356.5" stroke="#8d9577" stroke-width="5" stroke-linejoin="miter"/>
<polyline points="258.9,381.6 258.9,246.5 804.2,246.5 804.2,356.5" stroke="#b7bda4" stroke-width="2.1" stroke-linejoin="miter"/>
<polyline points="258.9,340 258.9,381.6 300,381.6 300,537" stroke="#8d9577" stroke-width="5" stroke-linejoin="miter"/>
<polyline points="258.9,340 258.9,381.6 300,381.6 300,537" stroke="#b7bda4" stroke-width="2.1" stroke-linejoin="miter"/>
<polyline points="261,295.5 307,295.5" stroke="#8d9577" stroke-width="5" stroke-linejoin="miter"/>
<polyline points="261,295.5 307,295.5" stroke="#b7bda4" stroke-width="2.1" stroke-linejoin="miter"/>
<polyline points="372,312.6 462,312.6" stroke="#8d9577" stroke-width="5.6" stroke-linejoin="miter"/>
<polyline points="372,312.6 462,312.6" stroke="#b7bda4" stroke-width="2.4" stroke-linejoin="miter"/>
<polyline points="528,308.5 548,308.5" stroke="#8d9577" stroke-width="6" stroke-linejoin="miter"/>
<polyline points="528,308.5 548,308.5" stroke="#b7bda4" stroke-width="2.5" stroke-linejoin="miter"/>
<polyline points="612.8,307.8 649,307.8" stroke="#8d9577" stroke-width="5.4" stroke-linejoin="miter"/>
<polyline points="612.8,307.8 649,307.8" stroke="#b7bda4" stroke-width="2.3" stroke-linejoin="miter"/>
<path d="M366.5 247 L361.1 242.9 V251.1 Z" fill="#000"/>
<path d="M306.5 295.5 L301.1 291.4 V299.6 Z" fill="#000"/>
<path d="M542.5 308.5 L537.1 304.4 V312.6 Z" fill="#000"/>
<path d="M300 427 L295.9 432.4 H304.1 Z" fill="#000"/>
<path d="M398 242 V251.4 L406.7 246.7 L415.5 242 V251.4 L406.7 246.7 Z" fill="#c4c4c4" stroke="#222" stroke-width="0.9"/>
<path d="M406.7 246.7 V239.4 M404 239.4 H409.4" stroke="#000" stroke-width="1"/>
<polyline points="495.2,370.3 495.2,506" stroke="#9a5564" stroke-width="4.6" stroke-linejoin="miter"/>
<polyline points="495.2,370.3 495.2,506" stroke="#c68e99" stroke-width="1.9" stroke-linejoin="miter"/>
<polyline points="495.2,404.3 656.8,404.3 656.8,363" stroke="#9a5564" stroke-width="4.4" stroke-linejoin="miter"/>
<polyline points="495.2,404.3 656.8,404.3 656.8,363" stroke="#c68e99" stroke-width="1.8" stroke-linejoin="miter"/>
<path d="M599.3 404.4 L604.6999999999999 400.29999999999995 V408.5 Z" fill="#000"/>
<path d="M495 509.8 L490.2 505.2 H499.8 Z" fill="#000"/>
<path d="M490.4 381.3 H499.6 L495 390.3 L499.6 399.3 H490.4 L495 390.3 Z" fill="#b8b8b8" stroke="#000" stroke-width="0.9"/>
<path d="M495 390.3 H503.2 M503.2 387.8 V392.8" stroke="#000" stroke-width="1"/>
<path d="M652.7 382.20000000000005 H661.3 L657 390.6 L661.3 399.0 H652.7 L657 390.6 Z" fill="#10e010" stroke="#044a04" stroke-width="0.9"/>
<rect x="652.8" y="381" width="8.6" height="1.6" fill="#9a5564"/><rect x="652.8" y="398.6" width="8.6" height="1.6" fill="#9a5564"/>
<polyline points="622,443.4 638.7,443.4 638.7,412.4 754.8,412.4 754.8,279" stroke="#5f9aab" stroke-width="4.4" stroke-linejoin="miter"/>
<polyline points="622,443.4 638.7,443.4 638.7,412.4 754.8,412.4 754.8,279" stroke="#96c3ce" stroke-width="1.8" stroke-linejoin="miter"/>
<polyline points="718,362.5 718,412.4" stroke="#5f9aab" stroke-width="4.4" stroke-linejoin="miter"/>
<polyline points="718,362.5 718,412.4" stroke="#96c3ce" stroke-width="1.8" stroke-linejoin="miter"/>
<rect x="750.4" y="272.8" width="9.4" height="6.8" rx="0.8" fill="#5f9aab"/><path d="M752.6 274 V279 M755 274 V279 M757.4 274 V279" stroke="#a9d2dc" stroke-width="0.9"/>
<path d="M678.2 412.4 L672.8000000000001 408.29999999999995 V416.5 Z" fill="#000"/>
<path d="M750.4 304.1 H759.6 L755 313.5 L759.6 322.9 H750.4 L755 313.5 Z" fill="#10e010" stroke="#044a04" stroke-width="0.9"/>
<rect x="750.6" y="303.2" width="9" height="1.6" fill="#5f9aab"/><rect x="750.6" y="322.4" width="9" height="1.6" fill="#5f9aab"/>
<path d="M713.6 380.40000000000003 H722.8000000000001 L718.2 389.8 L722.8000000000001 399.2 H713.6 L718.2 389.8 Z" fill="#10e010" stroke="#044a04" stroke-width="0.9"/>
<rect x="713.8" y="379.4" width="9" height="1.6" fill="#5f9aab"/><rect x="713.8" y="398.6" width="9" height="1.6" fill="#5f9aab"/>
<polyline points="767.3,358 767.3,420.6 667.4,420.6 667.4,539.6 672.5,539.6" stroke="#82483a" stroke-width="4.2" stroke-linejoin="miter"/>
<polyline points="767.3,358 767.3,420.6 667.4,420.6 667.4,539.6 672.5,539.6" stroke="#b27a6a" stroke-width="1.8" stroke-linejoin="miter"/>
<path d="M727 420.6 L721.6 416.5 V424.70000000000005 Z" fill="#000"/>
<path d="M762.9 378.4 H771.6999999999999 L767.3 388 L771.6999999999999 397.6 H762.9 L767.3 388 Z" fill="#10e010" stroke="#044a04" stroke-width="0.9"/>
<rect x="763" y="377.4" width="8.8" height="1.6" fill="#82483a"/><rect x="763" y="397" width="8.8" height="1.6" fill="#82483a"/>
<polyline points="745,356.6 774,356.6" stroke="#2a7d5e" stroke-width="4.2" stroke-linejoin="miter"/>
<polyline points="745,356.6 774,356.6" stroke="#52a685" stroke-width="1.8" stroke-linejoin="miter"/>
<polyline points="799,356.6 808.8,356.6 808.8,429.2 700.2,429.2 700.2,481" stroke="#2a7d5e" stroke-width="4.8" stroke-linejoin="miter"/>
<polyline points="799,356.6 808.8,356.6 808.8,429.2 700.2,429.2 700.2,481" stroke="#52a685" stroke-width="2.0" stroke-linejoin="miter"/>
<path d="M700.2 485.4 L695.2 481.0 H705.2 Z" fill="#000"/>
<rect x="338" y="524.4" width="31.6" height="13.6" fill="#a9ae96"/><rect x="338" y="527.4" width="31.6" height="5" fill="#c9cdb9"/>
<path d="M356 531 L359.4 531 L357.6 535 L359.4 538 H369.6 V531 Z" fill="#0000ff"/>
<rect x="337.4" y="523" width="1.6" height="16.6" fill="#d020c0"/><rect x="339" y="523" width="1" height="16.6" fill="#222"/>
<rect x="368.6" y="521" width="2.6" height="20.4" fill="#111"/>
<polyline points="736.6,540 732.6,540 732.6,468.6 798.4,468.6" stroke="#2a7d5e" stroke-width="4.8" stroke-linejoin="miter"/>
<polyline points="736.6,540 732.6,540 732.6,468.6 798.4,468.6" stroke="#52a685" stroke-width="2.0" stroke-linejoin="miter"/>
<path d="M803.6 468.6 L798.2 463.40000000000003 V473.8 Z" fill="#000"/>
<rect x="281" y="283" width="7" height="11" fill="url(#fm)"/>
<rect x="274.5" y="292.8" width="20" height="5.6" fill="url(#fmV)"/>
<rect x="273" y="291.8" width="1.6" height="7.6" fill="#8c8c8c"/><rect x="294.4" y="291.8" width="1.6" height="7.6" fill="#8c8c8c"/>
<rect x="435" y="300" width="7" height="11" fill="url(#fm)"/>
<rect x="428.5" y="309.8" width="20" height="5.6" fill="url(#fmV)"/>
<rect x="427" y="308.8" width="1.6" height="7.6" fill="#8c8c8c"/><rect x="448.4" y="308.8" width="1.6" height="7.6" fill="#8c8c8c"/>
<rect x="260.9" y="263.2" width="47" height="17" fill="#fff" stroke="#3fa663" stroke-width="1"/>
<text x="284.4" y="274.5" font-size="7.8" fill="#111" text-anchor="middle" textLength="25" lengthAdjust="spacingAndGlyphs" stroke="#111" stroke-width="0.15">107 L/s</text>
<rect x="415.3" y="280.0" width="47" height="16.5" fill="#fff" stroke="#3fa663" stroke-width="1"/>
<text x="438.8" y="291.05" font-size="7.8" fill="#111" text-anchor="middle" textLength="25" lengthAdjust="spacingAndGlyphs" stroke="#111" stroke-width="0.15">196 L/s</text>
<text x="272.5" y="260.4" font-size="9.3" fill="#111" textLength="26.3" lengthAdjust="spacingAndGlyphs" >Inflow</text>
<text x="417.5" y="277" font-size="9.3" fill="#111" textLength="43" lengthAdjust="spacingAndGlyphs" >Plant Flow</text>
<text x="318" y="279" font-size="9.3" fill="#111" textLength="45" lengthAdjust="spacingAndGlyphs" >Raw Water</text>
<text x="313" y="289.3" font-size="9.3" fill="#111" textLength="54.3" lengthAdjust="spacingAndGlyphs" >Balance Tank</text>
<rect x="307.5" y="293.4" width="3.3" height="80" fill="url(#wall)"/><rect x="368.7" y="293.4" width="3.3" height="80" fill="url(#wall)"/><rect x="307.5" y="369.3" width="64.5" height="4.3" fill="url(#wallV)"/>
<rect x="310.6" y="293.4" width="58.3" height="14.2" fill="#c2c2c2"/>
<rect x="310.6" y="307.6" width="58.3" height="61.6" fill="#0000ff"/>
<rect x="326.1" y="344.5" width="29.2" height="9.2" fill="#fff" stroke="#000" stroke-width="1"/>
<text x="340.70000000000005" y="351.3" font-size="6" fill="#000" text-anchor="middle" textLength="13.6" lengthAdjust="spacingAndGlyphs" stroke="#000" stroke-width="0.25">6.3 ft</text>
<path d="M307.5 369.4 H299" stroke="#3fae3f" stroke-width="0.8"/>
<rect x="277.3" y="365.4" width="22" height="8" rx="4" fill="#8ed04c" stroke="#3d9a1f" stroke-width="1"/>
<text x="288.3" y="371.6" font-size="5.5" fill="#3d7a1f" text-anchor="middle">&#948;</text>
<g transform="translate(396.3 281.7) scale(1.0)">
<path d="M-6.3 0 H6.3 M0 -1 V8" stroke="#000" stroke-width="1.1"/>
<rect x="-6.9" y="7.5" width="13.8" height="11" fill="url(#gH)"/>
<rect x="-8.4" y="12.6" width="16.8" height="1.5" fill="#0a9a0a"/>
<path d="M-6.9 18 H6.9 L10.2 22.5 V25 H-10.2 V22.5 Z" fill="url(#gH)"/>
<rect x="-9.4" y="24.2" width="18.8" height="14" fill="#222"/>
<rect x="-9" y="24.6" width="8" height="13.2" fill="url(#sil)"/><rect x="1" y="24.6" width="8" height="13.2" fill="url(#sil)"/>
<circle cx="-1.7" cy="31.5" r="1.1" fill="#b5561f"/><circle cx="1.7" cy="31.5" r="1.1" fill="#b5561f"/>
<rect x="-14.4" y="22" width="5.2" height="17.2" rx="1.6" fill="url(#gH)"/><rect x="9.2" y="22" width="5.2" height="17.2" rx="1.6" fill="url(#gH)"/>
<rect x="-16.6" y="26.4" width="2.3" height="8.6" fill="#9ea388"/><rect x="14.3" y="26.4" width="2.3" height="8.6" fill="#9ea388"/>
</g>
<g transform="translate(786.05 330) scale(0.89)">
<path d="M-6.3 0 H6.3 M0 -1 V8" stroke="#000" stroke-width="1.1"/>
<rect x="-6.9" y="7.5" width="13.8" height="11" fill="url(#gH)"/>
<rect x="-8.4" y="12.6" width="16.8" height="1.5" fill="#0a9a0a"/>
<path d="M-6.9 18 H6.9 L10.2 22.5 V25 H-10.2 V22.5 Z" fill="url(#gH)"/>
<rect x="-9.4" y="24.2" width="18.8" height="14" fill="#222"/>
<rect x="-9" y="24.6" width="8" height="13.2" fill="url(#sil)"/><rect x="1" y="24.6" width="8" height="13.2" fill="url(#sil)"/>
<circle cx="-1.7" cy="31.5" r="1.1" fill="#b5561f"/><circle cx="1.7" cy="31.5" r="1.1" fill="#b5561f"/>
<rect x="-14.4" y="22" width="5.2" height="17.2" rx="1.6" fill="url(#gH)"/><rect x="9.2" y="22" width="5.2" height="17.2" rx="1.6" fill="url(#gH)"/>
<rect x="-16.6" y="26.4" width="2.3" height="8.6" fill="#9ea388"/><rect x="14.3" y="26.4" width="2.3" height="8.6" fill="#9ea388"/>
</g>
<path d="M624.4 284.1 H635.1999999999999 M629.8 283.1 V291.1" stroke="#000" stroke-width="1.1"/>
<rect x="624.5999999999999" y="290.70000000000005" width="10.4" height="9" fill="url(#gH)"/>
<rect x="623.4" y="294.90000000000003" width="12.8" height="1.3" fill="#0a9a0a"/>
<path d="M624.5999999999999 298.6 H635.0 L636.8 301.6 H622.8 Z" fill="url(#gH)"/>
<rect x="618.9" y="301.3" width="21.8" height="12.4" rx="0.8" fill="url(#gV)"/>
<rect x="618.9" y="301.3" width="2.4" height="12.4" fill="#067806" opacity="0.6"/><rect x="638.3" y="301.3" width="2.4" height="12.4" fill="#067806" opacity="0.6"/>
<rect x="617.0" y="303.90000000000003" width="1.9" height="8.6" fill="#a5aa90"/><rect x="640.6999999999999" y="303.90000000000003" width="1.9" height="8.6" fill="#a5aa90"/>
<path d="M463.2 303 V356.6 L490.4 366.4 V370.3 H499.6 V366.4 L526.8 356.6 V303" fill="#0000ff" stroke="#4a4a4a" stroke-width="2.6" stroke-linejoin="miter"/>
<path d="M463.2 303 V356.6 L490.4 366.4 V370.3 M499.6 370.3 V366.4 L526.8 356.6 V303" stroke="#b0b0b0" stroke-width="0.6"/>
<rect x="464.5" y="302.4" width="61" height="4.2" fill="#e4e4e4"/><rect x="462" y="302" width="66" height="1" fill="#4a4a4a"/>
<path d="M482.1 307 V341.3 M508.6 307 V341.3" stroke="#000050" stroke-width="1"/>
<path d="M467.6 348 L494.5 355.8" stroke="#d8d820" stroke-width="1.7"/><path d="M494.5 355.8 L521 348" stroke="#30c030" stroke-width="1.7"/>
<rect x="492.5" y="297" width="4" height="60" fill="url(#gH)"/>
<rect x="492.5" y="297" width="4" height="33" fill="#065806" opacity="0.5"/>
<ellipse cx="488.3" cy="333" rx="6.4" ry="2.4" fill="#10c010" stroke="#067006" stroke-width="0.5"/><ellipse cx="500.6" cy="333" rx="6.4" ry="2.4" fill="#10c010" stroke="#067006" stroke-width="0.5"/>
<rect x="485.6" y="253.2" width="17.8" height="19.2" rx="2" fill="url(#gH)" stroke="#044a04" stroke-width="0.7"/>
<rect x="485.0" y="253.2" width="19.0" height="4.2" rx="1.6" fill="url(#gH)" stroke="#044a04" stroke-width="0.6"/>
<rect x="486.20000000000005" y="269.4" width="16.6" height="3" rx="1" fill="url(#gH)" stroke="#044a04" stroke-width="0.6"/>
<path d="M488.6 258.2 V268.9" stroke="#022c02" stroke-width="1"/>
<path d="M491.5 258.2 V268.9" stroke="#022c02" stroke-width="1"/>
<path d="M494.5 258.2 V268.9" stroke="#022c02" stroke-width="1"/>
<path d="M497.5 258.2 V268.9" stroke="#022c02" stroke-width="1"/>
<path d="M500.4 258.2 V268.9" stroke="#022c02" stroke-width="1"/>
<rect x="485.6" y="277.2" width="17.8" height="20.7" rx="2" fill="url(#gH)" stroke="#044a04" stroke-width="0.7"/>
<rect x="485.0" y="277.2" width="19.0" height="4.2" rx="1.6" fill="url(#gH)" stroke="#044a04" stroke-width="0.6"/>
<rect x="486.20000000000005" y="294.9" width="16.6" height="3" rx="1" fill="url(#gH)" stroke="#044a04" stroke-width="0.6"/>
<path d="M488.6 282.2 V294.4" stroke="#022c02" stroke-width="1"/>
<path d="M491.5 282.2 V294.4" stroke="#022c02" stroke-width="1"/>
<path d="M494.5 282.2 V294.4" stroke="#022c02" stroke-width="1"/>
<path d="M497.5 282.2 V294.4" stroke="#022c02" stroke-width="1"/>
<path d="M500.4 282.2 V294.4" stroke="#022c02" stroke-width="1"/>
<rect x="492.6" y="272.4" width="3.8" height="4.8" fill="#0a8a0a"/>
<text x="447.5" y="375.3" font-size="9.3" fill="#111" textLength="32" lengthAdjust="spacingAndGlyphs" >Clarifier</text>
<rect x="548" y="302.2" width="3" height="60.4" rx="0.8" fill="url(#wall)"/><rect x="610" y="302.2" width="3" height="60.4" rx="0.8" fill="url(#wall)"/><rect x="548" y="359.4" width="65" height="3.2" rx="0.8" fill="url(#wallV)"/>
<rect x="550.8" y="302.5" width="59.2" height="3.2" fill="#d8d8cc"/>
<rect x="550.8" y="305.6" width="59.2" height="54" fill="#0000ff"/>
<path d="M564.5 304.8 V344.5 M594.1 304.8 V344.5 M579.4 319.3 V359.8" stroke="#000" stroke-width="2.5"/>
<path d="M557.3 335.3 V352.5 H572 V335.4 M572 329.6 V312.6 H586.6 V329.6 M586.6 335.3 V352.5 H601.6 V335.4" stroke="#00002a" stroke-width="0.9"/>
<path d="M570.2 337.4 L572 335 L573.8 337.4 M584.8 327.6 L586.6 330 L588.4 327.6 M599.8 337.4 L601.6 335 L603.4 337.4" stroke="#00002a" stroke-width="0.9"/>
<text x="554.6" y="376.8" font-size="9.3" fill="#111" textLength="59.4" lengthAdjust="spacingAndGlyphs" >Re-Carbonation</text>
<rect x="649.4" y="302" width="14.4" height="25.6" fill="#0000ff"/>
<path d="M649.6 301.6 V327.4 H663.8" stroke="#333" stroke-width="2"/>
<rect x="649.4" y="349.4" width="14.4" height="12" fill="#cacaca"/>
<path d="M649.6 345 V361.2 H663.8" stroke="#333" stroke-width="2"/>
<rect x="663" y="301.6" width="82.4" height="61" fill="#3a3a3a"/>
<rect x="665" y="301.6" width="77.8" height="3.8" fill="#d6d6d6"/>
<rect x="665" y="305.4" width="77.8" height="39.6" fill="#0000ff"/>
<rect x="650.4" y="301.6" width="12.4" height="1.6" fill="#d6d6d6"/><rect x="663" y="309.6" width="2" height="1" fill="#0000ff"/><rect x="663" y="313.6" width="2" height="1" fill="#0000ff"/>
<rect x="665" y="345" width="77.8" height="9" fill="url(#med1)"/><rect x="665" y="354" width="77.8" height="6" fill="url(#med2)"/>
<rect x="687.3" y="318.0" width="28.6" height="8.8" fill="#fff" stroke="#000" stroke-width="1"/>
<text x="701.5999999999999" y="324.59999999999997" font-size="6" fill="#000" text-anchor="middle" textLength="13.4" lengthAdjust="spacingAndGlyphs" stroke="#000" stroke-width="0.25">0.0 ft</text>
<text x="687.5" y="375.3" font-size="9.3" fill="#111" textLength="21.3" lengthAdjust="spacingAndGlyphs" >Filter</text>
<rect x="531.8" y="433.8" width="60.8" height="17.8" rx="7.5" ry="8.9" fill="url(#rV)" stroke="#300" stroke-width="0.8"/>
<path d="M546 448 V454.8 M581.2 448 V454.8" stroke="#000" stroke-width="1.3"/><rect x="568.6" y="432" width="3" height="2.2" fill="#888" stroke="#333" stroke-width="0.4"/><rect x="530.4" y="441.4" width="1.6" height="3.4" fill="#222"/>
<rect x="592.6" y="441.2" width="11" height="3.4" fill="#f4f4f4" stroke="#777" stroke-width="0.6"/>
<path d="M606.5 450 L604.4 454.8 H619.8 L617.6 450 Z" fill="#e01010" stroke="#700" stroke-width="0.5"/>
<circle cx="612.2" cy="442.8" r="8.2" fill="#fff" stroke="#d01818" stroke-width="2.6"/><circle cx="612.2" cy="442.8" r="9.6" stroke="#600" stroke-width="0.5"/>
<path d="M608.4 439 L616 446.6 M616 439 L608.4 446.6" stroke="#000" stroke-width="2.6"/>
<text x="561.3" y="465.8" font-size="9.3" fill="#111" textLength="49.2" lengthAdjust="spacingAndGlyphs" >Air Blower 1</text>
<path d="M609 546.4 H618" stroke="#b04040" stroke-width="0.8"/>
<rect x="587" y="541.8" width="22" height="9.4" rx="4.4" fill="#c8c832" stroke="#8a8a10" stroke-width="1"/>
<text x="598" y="549" font-size="6" fill="#a05a10" text-anchor="middle">&#9760;</text>
<rect x="373.2" y="382.4" width="78.6" height="108" fill="#e1e1e1" stroke="#3fa663" stroke-width="1.2"/>
<rect x="377.6" y="390.8" width="70" height="18.8" fill="#fff"/>
<path d="M377.6 409.20000000000005 H447.2 V390.8" stroke="#888" stroke-width="1.6"/><path d="M377.6 409.6 V390.8 H447.6" stroke="#eee" stroke-width="1"/>
<text x="415.1" y="402.59999999999997" font-size="8.5" font-weight="bold" fill="#119040" text-anchor="middle" textLength="47.8" lengthAdjust="spacingAndGlyphs" font-family="'Liberation Sans',sans-serif">Plant Alarms</text>
<rect x="377.6" y="417" width="70" height="19.6" fill="#fff"/>
<path d="M377.6 436.20000000000005 H447.2 V417" stroke="#888" stroke-width="1.6"/><path d="M377.6 436.6 V417 H447.6" stroke="#eee" stroke-width="1"/>
<text x="412" y="429.2" font-size="8.5" font-weight="bold" fill="#119040" text-anchor="middle" textLength="56.3" lengthAdjust="spacingAndGlyphs" font-family="'Liberation Sans',sans-serif">Flow Summary</text>
<rect x="377.6" y="441.7" width="70" height="19.4" fill="#fff"/>
<path d="M377.6 460.7 H447.2 V441.7" stroke="#888" stroke-width="1.6"/><path d="M377.6 461.09999999999997 V441.7 H447.6" stroke="#eee" stroke-width="1"/>
<text x="411.8" y="453.79999999999995" font-size="8.5" font-weight="bold" fill="#119040" text-anchor="middle" textLength="62.6" lengthAdjust="spacingAndGlyphs" font-family="'Liberation Sans',sans-serif">Device Summary</text>
<text x="407.2" y="472.8" font-size="8.5" font-weight="bold" fill="#119040" text-anchor="end" font-family="'Liberation Sans',sans-serif" textLength="18.4" lengthAdjust="spacingAndGlyphs">Level</text>
<text x="407.2" y="480.8" font-size="8.5" font-weight="bold" fill="#119040" text-anchor="end" font-family="'Liberation Sans',sans-serif" textLength="21.2" lengthAdjust="spacingAndGlyphs">Trend</text>
<path d="M417.5 467.5 V478.8 H439.4" stroke="#fff" stroke-width="1"/><path d="M419 474.5 C421.5 468 423.5 469 425.5 472.5 C427.5 476 429.5 476.5 431.5 472 C433 468.6 435.5 469.5 437.5 470.5" stroke="#fff" stroke-width="1.2"/><path d="M418.5 480.2 H438.4" stroke="#fff" stroke-width="0.8" stroke-dasharray="1.5 1"/>
<text x="385.6" y="507" font-size="9.3" fill="#111" textLength="21.2" lengthAdjust="spacingAndGlyphs" >River</text>
<text x="269.2" y="561" font-size="9.3" fill="#111" textLength="63" lengthAdjust="spacingAndGlyphs" >River Lift Station</text>
<text x="467.7" y="563.5" font-size="9.3" fill="#111" textLength="55.4" lengthAdjust="spacingAndGlyphs" >Sludge Lagoon</text>
<text x="622" y="563.2" font-size="9.3" fill="#111" textLength="70" lengthAdjust="spacingAndGlyphs" >Backwash Pumps</text>
<text x="712.6" y="563.2" font-size="9.3" fill="#111" textLength="74.5" lengthAdjust="spacingAndGlyphs" >ClearWater Pumps</text>
<text x="750" y="451.4" font-size="9.3" fill="#111" textLength="45.4" lengthAdjust="spacingAndGlyphs">To Storage</text><path d="M750 453.2 H795.4" stroke="#111" stroke-width="0.8"/>
<text x="755.6" y="462.4" font-size="9.3" fill="#111" textLength="39.6" lengthAdjust="spacingAndGlyphs">Reservoir</text><path d="M755.6 464.2 H795.4" stroke="#111" stroke-width="0.8"/>
<rect x="679.6" y="517.3" width="7.2" height="5" rx="2" fill="url(#rH)" stroke="#4a0000" stroke-width="0.5"/>
<path d="M678.3000000000001 521.5999999999999 H688.1 L688.8000000000001 525.8 L689.5 526.3 L690.1 538.0999999999999 H676.3000000000001 L676.9000000000001 526.3 L677.6 525.8 Z" fill="url(#rH)" stroke="#4a0000" stroke-width="0.5"/>
<rect x="672.6" y="538.0999999999999" width="19.600000000000023" height="4.6" rx="1.4" fill="url(#rV)" stroke="#4a0000" stroke-width="0.5"/>
<path d="M672.3000000000001 535.9 V545.9" stroke="#000" stroke-width="1.3"/>
<path d="M677.6 542.6999999999999 H688.8000000000001 L688.0 545.9 H686.2 L685.6 543.9 H680.8000000000001 L680.2 545.9 H678.4000000000001 Z" fill="#c01010"/>
<rect x="711.1999999999999" y="518" width="7.2" height="5" rx="2" fill="url(#gH)" stroke="#033a03" stroke-width="0.5"/>
<path d="M709.9 522.3 H719.6999999999999 L720.4 526.5 L721.0999999999999 527 L721.6999999999999 538.8 H707.9 L708.5 527 L709.1999999999999 526.5 Z" fill="url(#gH)" stroke="#033a03" stroke-width="0.5"/>
<rect x="705.8" y="538.8" width="19.600000000000023" height="4.6" rx="1.4" fill="url(#gV)" stroke="#033a03" stroke-width="0.5"/>
<path d="M725.6999999999999 536.6 V546.6" stroke="#000" stroke-width="1.3"/>
<path d="M709.1999999999999 543.4 H720.4 L719.5999999999999 546.6 H717.8 L717.1999999999999 544.6 H712.4 L711.8 546.6 H710.0 Z" fill="#0aa00a"/>
<rect x="745.0" y="517.3" width="7.2" height="5" rx="2" fill="url(#rH)" stroke="#4a0000" stroke-width="0.5"/>
<path d="M743.7 521.5999999999999 H753.5 L754.2 525.8 L754.9 526.3 L755.5 538.0999999999999 H741.7 L742.3000000000001 526.3 L743.0 525.8 Z" fill="url(#rH)" stroke="#4a0000" stroke-width="0.5"/>
<rect x="738.0" y="538.0999999999999" width="19.600000000000023" height="4.6" rx="1.4" fill="url(#rV)" stroke="#4a0000" stroke-width="0.5"/>
<path d="M737.7 535.9 V545.9" stroke="#000" stroke-width="1.3"/>
<path d="M743.0 542.6999999999999 H754.2 L753.4 545.9 H751.6 L751.0 543.9 H746.2 L745.6 545.9 H743.8000000000001 Z" fill="#c01010"/>
<rect x="276.4" y="512.8" width="7.2" height="5" rx="2" fill="url(#gH)" stroke="#033a03" stroke-width="0.5"/>
<path d="M275.1 517.0999999999999 H284.9 L285.6 521.3 L286.3 521.8 L286.9 533.5999999999999 H273.1 L273.7 521.8 L274.4 521.3 Z" fill="url(#gH)" stroke="#033a03" stroke-width="0.5"/>
<rect x="271" y="533.5999999999999" width="19.600000000000023" height="4.6" rx="1.4" fill="url(#gV)" stroke="#033a03" stroke-width="0.5"/>
<path d="M290.90000000000003 531.4 V541.4" stroke="#000" stroke-width="1.3"/>
<path d="M274.4 538.1999999999999 H285.6 L284.8 541.4 H283 L282.4 539.4 H277.6 L277 541.4 H275.2 Z" fill="#0aa00a"/>
<rect x="310.4" y="512.8" width="7.2" height="5" rx="2" fill="url(#rH)" stroke="#4a0000" stroke-width="0.5"/>
<path d="M309.1 517.0999999999999 H318.9 L319.6 521.3 L320.3 521.8 L320.9 533.5999999999999 H307.1 L307.7 521.8 L308.4 521.3 Z" fill="url(#rH)" stroke="#4a0000" stroke-width="0.5"/>
<rect x="303.4" y="533.5999999999999" width="19.600000000000023" height="4.6" rx="1.4" fill="url(#rV)" stroke="#4a0000" stroke-width="0.5"/>
<path d="M303.09999999999997 531.4 V541.4" stroke="#000" stroke-width="1.3"/>
<path d="M308.4 538.1999999999999 H319.6 L318.8 541.4 H317 L316.4 539.4 H311.6 L311 541.4 H309.2 Z" fill="#c01010"/>
</g></svg>
<!--MEND-->
<!--MIMIC-->
<!-- alarm banner -->
<div class="a" style="left:1px;top:563px;width:846px;height:1px;background:#e2e2e2;"></div>
<div class="a" style="left:1px;top:564px;width:846px;height:115px;background:#fff;"></div>
<div class="a" style="left:4px;top:571px;width:51px;height:105px;background:#ff0000;"></div>
<div class="a" style="left:10px;top:624px;width:38px;height:1px;background:#ff5656;"></div>
<div class="a" style="left:2.5px;top:586.6px;width:51px;text-align:center;font-size:23px;line-height:26px;font-weight:bold;color:#000;">5</div>
<div class="a" style="left:2px;top:636.3px;width:51px;text-align:center;font-size:23px;line-height:26px;font-weight:bold;color:#000;letter-spacing:-1.2px;">10</div>
<div class="a" style="left:59px;top:569px;width:775px;height:95px;background:#fff;"></div>
<div class="a" style="left:59px;top:569px;width:775px;height:13px;background:#f0f0f0;border-bottom:1px solid #a9a9a9;"></div>
<div class="a" style="left:160px;top:569px;width:1px;height:13px;background:#fff;"></div><div class="a" style="left:161px;top:569px;width:1px;height:13px;background:#a9a9a9;"></div>
<div class="a" style="left:331px;top:569px;width:1px;height:13px;background:#fff;"></div><div class="a" style="left:332px;top:569px;width:1px;height:13px;background:#a9a9a9;"></div>
<div class="a" style="left:500.5px;top:569px;width:1px;height:13px;background:#fff;"></div><div class="a" style="left:501.5px;top:569px;width:1px;height:13px;background:#a9a9a9;"></div>
<div class="a" style="left:671.5px;top:569px;width:1px;height:13px;background:#fff;"></div><div class="a" style="left:672.5px;top:569px;width:1px;height:13px;background:#a9a9a9;"></div>
<svg width="848" height="704" viewBox="0 0 848 704" font-family="'Liberation Sans',sans-serif" font-size="10.6">
<text x="65" y="593" fill="#8b1c33" textLength="21.4" lengthAdjust="spacing" xml:space="preserve">High</text>
<text x="169" y="593" fill="#8b1c33" textLength="116.5" lengthAdjust="spacing" xml:space="preserve">15/05/2022 16:58:04.258</text>
<text x="338.75" y="592.75" fill="#8b1c33" textLength="137.5" lengthAdjust="spacing" xml:space="preserve">...nse for SGCHGINV00282L</text>
<text x="508.5" y="592" fill="#8b1c33" textLength="147.5" lengthAdjust="spacing" xml:space="preserve">License expires in under 15...</text>
<text x="679.75" y="592.75" fill="#8b1c33" textLength="67.5" lengthAdjust="spacing" xml:space="preserve">System Alarm</text>
<text x="65" y="604.9" fill="#8b1c33" textLength="21.4" lengthAdjust="spacing" xml:space="preserve">High</text>
<text x="169" y="605.2" fill="#8b1c33" textLength="116.5" lengthAdjust="spacing" xml:space="preserve">15/05/2022 23:02:23.940</text>
<text x="338.75" y="605.25" fill="#8b1c33" textLength="138.75" lengthAdjust="spacing" xml:space="preserve">...actory.Total Energy Usage</text>
<text x="508.5" y="604.5" fill="#8b1c33" textLength="147.5" lengthAdjust="spacing" xml:space="preserve">State changed from Overra...</text>
<text x="679.75" y="605.25" fill="#8b1c33" textLength="53" lengthAdjust="spacing" xml:space="preserve">Point State</text>
<text x="65" y="616.8" fill="#8b1c33" textLength="21.4" lengthAdjust="spacing" xml:space="preserve">High</text>
<text x="169" y="617.4" fill="#8b1c33" textLength="116.5" lengthAdjust="spacing" xml:space="preserve">07/05/2022 11:02:52.610</text>
<text x="338.75" y="617.25" fill="#8b1c33" textLength="142" lengthAdjust="spacing" xml:space="preserve">... Equipment.RTU.Outstation</text>
<text x="508.5" y="617.5" fill="#8b1c33" textLength="147.5" lengthAdjust="spacing" xml:space="preserve">Communications state - Failed</text>
<text x="679.75" y="617.25" fill="#8b1c33" textLength="90.5" lengthAdjust="spacing" xml:space="preserve">Outstation Comms</text>
<text x="65" y="628.8" fill="#8b1c33" textLength="21.4" lengthAdjust="spacing" xml:space="preserve">High</text>
<text x="169" y="629.6" fill="#8b1c33" textLength="116.5" lengthAdjust="spacing" xml:space="preserve">07/05/2022 11:02:52.606</text>
<text x="338.75" y="629.5" fill="#8b1c33" textLength="142" lengthAdjust="spacing" xml:space="preserve">... Equipment.RTU.Outstation</text>
<text x="508.5" y="629.5" fill="#8b1c33" textLength="147.5" lengthAdjust="spacing" xml:space="preserve">Communications state - Failed</text>
<text x="679.75" y="629.5" fill="#8b1c33" textLength="90.5" lengthAdjust="spacing" xml:space="preserve">Outstation Comms</text>
<text x="65" y="640.7" fill="#86cc86" textLength="37.6" lengthAdjust="spacing" xml:space="preserve">Medium</text>
<text x="169" y="641.9" fill="#86cc86" textLength="116.5" lengthAdjust="spacing" xml:space="preserve">15/05/2022 22:53:03.048</text>
<text x="338.75" y="642" fill="#86cc86" textLength="137.5" lengthAdjust="spacing" xml:space="preserve">... WTP.River.Runtime Alarm</text>
<text x="508.5" y="641" fill="#86cc86" textLength="147.5" lengthAdjust="spacing" xml:space="preserve">State changed from Normal...</text>
<text x="679.75" y="641.5" fill="#86cc86" textLength="53" lengthAdjust="spacing" xml:space="preserve">Point State</text>
<text x="65" y="652.6" fill="#86cc86" textLength="37.6" lengthAdjust="spacing" xml:space="preserve">Medium</text>
<text x="169" y="654.1" fill="#86cc86" textLength="116.5" lengthAdjust="spacing" xml:space="preserve">15/05/2022 16:57:45.322</text>
<text x="338.75" y="654" fill="#86cc86" textLength="144.25" lengthAdjust="spacing" xml:space="preserve">...ion 2.Dry Well Flood Switch</text>
<text x="508.5" y="653.5" fill="#86cc86" textLength="147.5" lengthAdjust="spacing" xml:space="preserve">State changed from Normal...</text>
<text x="679.75" y="654" fill="#86cc86" textLength="53" lengthAdjust="spacing" xml:space="preserve">Point State</text>
</svg>
<svg width="848" height="704" viewBox="0 0 848 704" font-family="'Liberation Sans',sans-serif" font-size="11">
<text x="63.9" y="579.2" fill="#000" textLength="42.7" lengthAdjust="spacingAndGlyphs">Severity</text>
<text x="168.4" y="579.2" fill="#000" textLength="22.8" lengthAdjust="spacingAndGlyphs">Time</text>
<text x="338.75" y="579.2" fill="#000" textLength="33.75" lengthAdjust="spacingAndGlyphs">Source</text>
<text x="508.5" y="579.2" fill="#000" textLength="43.75" lengthAdjust="spacingAndGlyphs">Message</text>
<text x="679.75" y="579.2" fill="#000" textLength="43.75" lengthAdjust="spacingAndGlyphs">Category</text>
</svg>
<div class="a" style="left:834px;top:569px;width:13px;height:95px;background:#f0f0f0;"></div>
<div class="a" style="left:834px;top:584px;width:12px;height:42px;background:#cdcdcd;"></div>
<div class="a" style="left:59px;top:664px;width:775px;height:12px;background:#f0f0f0;"></div>
<div class="a" style="left:73px;top:664px;width:661px;height:12px;background:#cdcdcd;"></div>
<svg width="848" height="704" viewBox="0 0 848 704" fill="none" stroke="#444" stroke-width="1.4"><path d="M836.5 578 L839.5 575 L842.5 578"/><path d="M836.5 654.5 L839.5 657.5 L842.5 654.5"/><path d="M67.5 666.8 L64.5 669.8 L67.5 672.8"/><path d="M824.5 666.8 L827.5 669.8 L824.5 672.8"/></svg>
<!-- status bar -->
<div class="a" style="left:1px;top:678px;width:846px;height:1px;background:#dadada;"></div>
<div class="a" style="left:1px;top:679px;width:846px;height:5px;background:#fff;"></div>
<div class="a" style="left:1px;top:684px;width:846px;height:18px;background:#f0eded;"></div>
<!--ALARMS-->
<!--STATUS-->

<!-- annotation line on top -->
<svg width="848" height="704" viewBox="0 0 848 704"><polyline points="122.5,24.6 100.8,24.6 89.5,184.6" fill="none" stroke="#000" stroke-width="2"/></svg>
</body></html>
